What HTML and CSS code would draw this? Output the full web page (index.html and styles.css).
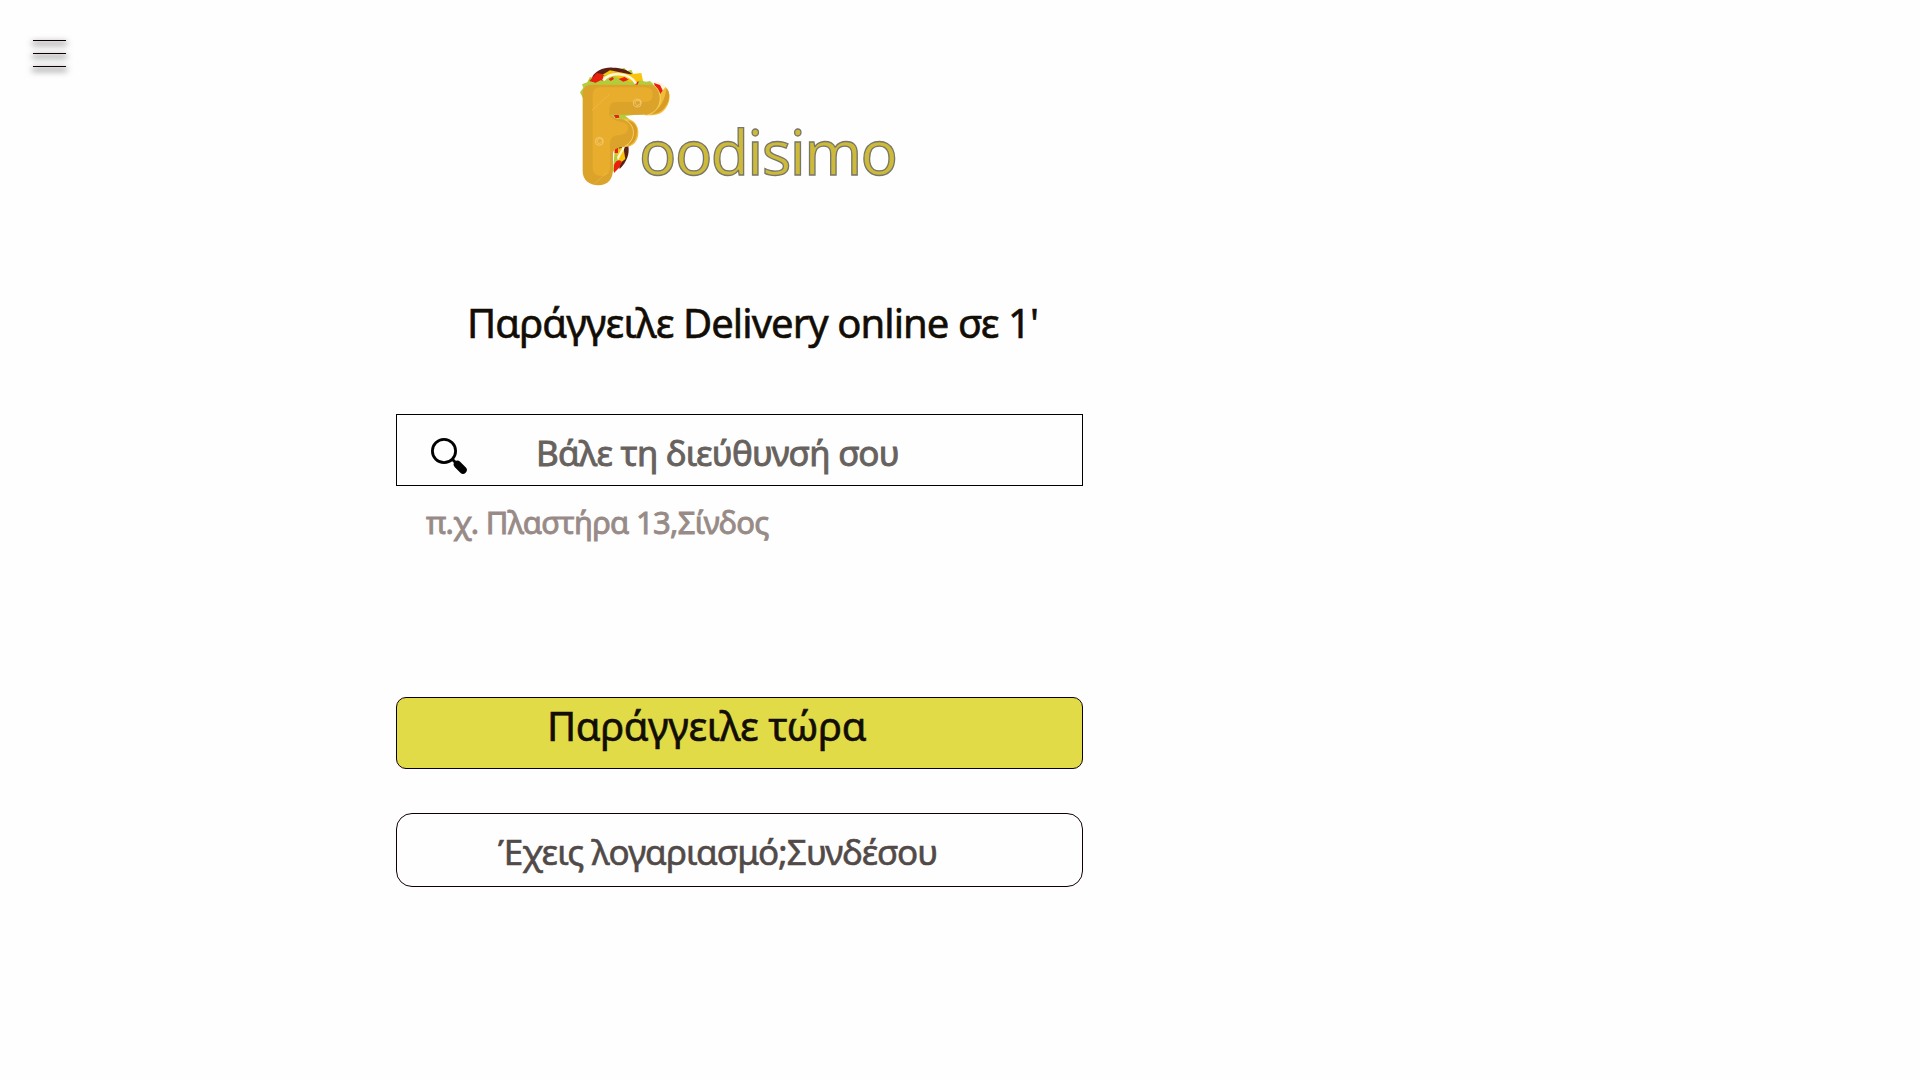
FILE: index.html
```html
<!DOCTYPE html>
<html lang="el">
<head>
<meta charset="utf-8">
<title>Foodisimo</title>
<link rel="stylesheet" href="styles.css">
</head>
<body>
<nav class="menu" aria-label="Menu"><span></span><span></span><span></span></nav>
<main class="page">
  <div class="brand">
    <svg class="brand-mark" viewBox="0 0 330 420" width="110" height="140">
      <path fill="#b3cc3c" d="M30 112l10-14-4-10 16-6 8-16 14 4 20-18 50-14 8 6 10-6 10 10 12-4 6 14 12 10 14 18 14-4 10 4 12-4 30 10 12 30-20 50-200 20-34-60z"/>
      <path fill="#5a2013" d="M66 68c8-20 36-32 62-30 26 0 48 8 60 20l-30 10-50-10-28 14z"/>
      <path fill="#f8c40c" d="M96 60l24-14 60 12 34-4 6 28-40-2-60-20z"/>
      <path fill="#e9200d" d="M58 78l22-24 20 4-2 20-22 6zM116 72l12-6 4 6-10 6zM146 72l18-6 12 8-16 6zM194 88c6-14 28-10 30 2l-8 4z"/>
      <path fill="none" stroke="#fff6dc" stroke-width="8" d="M100 76c20-26 78-26 98 10"/>
      <path fill="#b3cc3c" d="M36 108l12-22 16-6 12 4 16-8 22 4 14-2 14 8 16-2 14 8 16-2 12 6 8-20 20 4 12-2 12 12-2 30H44z"/>
      <path fill="#fff5df" d="M246 82c32-8 44 16 44 36l-20 10z"/>
      <path fill="#e9200d" d="M252 84l18 6 14 28-8 4-20-22z"/>
      <path fill="#f0bd39" d="M286 96c14 10 16 34 8 52-10 22-26 33-50 33h-20z"/>
      <path fill="#da9b24" d="M289 100c14 12 10 40-4 56-10 14-24 20-40 22 26-18 40-42 44-78z"/>
      <path fill="#5a2013" d="M132 272h43c4 24-4 48-26 70z"/>
      <path fill="#f8c40c" d="M134 286l26-10 6 36-18 14-14-8z"/>
      <path fill="none" stroke="#fff6dc" stroke-width="7" d="M162 272c-4 20-16 24-26 56"/>
      <path fill="#b3cc3c" d="M128 352l8-80 14-2-10 30 8 36z"/>
      <path fill="#e9200d" d="M134 282l10-4v16h-10zM132 330c8-18 20-16 24-8l-10 18-14 14z"/>
      <path fill="#b3cc3c" d="M126 178l34 0 20 16-20 8z"/>
      <path fill="#e9200d" d="M132 180l14 0 2 8-12 2z"/>
      <path fill="#efbd3c" d="M150 192c36-8 55 16 55 40 0 28-16 46-48 44z"/>
      <path fill="#da9b24" d="M174 196c24 6 30 24 26 42-2 18-12 30-26 34 16-24 16-52 0-76z"/>
      <path fill="#dca32b" d="M64 89h172c22 0 34 14 34 38 0 30-12 52-36 52H120c12 10 24 12 38 14 20 2 31 16 31 36 0 30-14 46-36 48-16 2-24 8-24 22v44c0 28-14 48-44 48-28 0-47-16-47-42V116c0-16 8-27 26-27z"/>
      <path fill="#e8ad2c" d="M92 97h128c20 0 28 6 28 20 0 18-8 24-26 24h-84c-14 0-20 10-20 26v14c12 16 24 18 36 20 14 2 20 8 20 16 0 16-10 22-32 24-16 2-22 12-22 28v68c0 18-8 26-24 26-18 0-28-8-28-26V124c0-18 6-27 24-27z"/>
      <path fill="none" stroke="#f5d260" stroke-width="3" d="M254 92c30 28 18 78-22 88M164 194c34 14 36 62 0 80"/>
      <g fill="none" stroke="#f2cd79" stroke-width="2.5">
        <path d="M205 152c-14-2-12-18 0-16 10 2 8 14 0 12M91 267c-14-2-12-18 0-16 10 2 8 14 0 12"/>
        <circle cx="202" cy="144" r="12"/><circle cx="88" cy="259" r="12"/>
        <path stroke-width="1.5" d="M66 166l52-48M74 386l38-34" stroke-dasharray="5 3"/>
      </g>
    </svg>
    <span class="brand-name">oodisimo</span>
  </div>
  <h1 class="title">Παράγγειλε Delivery online σε 1'</h1>
  <div class="address">
    <svg class="search-icon" viewBox="0 0 36 36" width="36" height="36">
      <circle cx="13" cy="13" r="11.6" fill="none" stroke="#000" stroke-width="2.8"/>
      <path d="M21 21l4 4" stroke="#000" stroke-width="3"/>
      <path d="M26.5 26.5l5.5 5.5" stroke="#000" stroke-width="7.5" stroke-linecap="round"/>
    </svg>
    <span class="address-label">Βάλε τη διεύθυνσή σου</span>
  </div>
  <p class="hint">π.χ. Πλαστήρα 13,Σίνδος</p>
  <div class="button order"><span>Παράγγειλε τώρα</span></div>
  <div class="button login"><span>Έχεις λογαριασμό;Συνδέσου</span></div>
</main>
</body>
</html>
```
FILE: styles.css
```css
* { box-sizing: border-box; }
body {
  margin: 0;
  height: 1080px;
  display: flex;
  align-items: flex-start;
  overflow: hidden;
  background: #fefefe;
  font-family: "Noto Sans", "Open Sans", sans-serif;
  white-space: nowrap;
}
.menu {
  width: 396px;
  padding: 40px 0 0 33px;
  display: flex;
  flex-direction: column;
  gap: 12px;
}
.menu span {
  width: 33px;
  height: 1px;
  background: #100006;
  box-shadow: 0 3px 6px 1px rgba(0, 0, 0, .5);
}
.page { width: 687px; padding-top: 55px; }
.brand { display: flex; height: 140px; padding-left: 174px; }
.brand-mark { flex: none; }
.brand-name {
  margin: 54px 0 0 -41px;
  font-size: 62px;
  line-height: 84px;
  color: #cdb93a;
  -webkit-text-stroke: 1.3px #77766a;
  letter-spacing: -1.6px;
}
.title {
  margin: 101px 0 0 71px;
  font-size: 40px;
  font-weight: 400;
  line-height: 54px;
  letter-spacing: -.93px;
  color: #120d05;
  -webkit-text-stroke: .6px #120d05;
}
.address {
  display: flex;
  height: 72px;
  margin-top: 64px;
  padding: 4px 0 0 34px;
  border: 1px solid #000;
}
.search-icon { margin-top: 19px; }
.address-label {
  margin-left: 69px;
  font-size: 35px;
  line-height: 68px;
  letter-spacing: -.73px;
  color: #67625e;
  -webkit-text-stroke: .9px #67625e;
}
.hint {
  margin: 14px 0 0 30px;
  font-size: 31px;
  line-height: 44px;
  letter-spacing: -.7px;
  color: #988b87;
  -webkit-text-stroke: .9px #988b87;
}
.button { border: 1px solid #100006; }
.order {
  height: 72px;
  margin-top: 153px;
  padding: 1px 0 0 150px;
  border-radius: 10px;
  background: #e1db47;
  font-size: 40px;
  line-height: 54px;
  letter-spacing: -.45px;
  color: #120d05;
  -webkit-text-stroke: .6px #120d05;
}
.login {
  height: 74px;
  margin-top: 44px;
  padding: 14px 0 0 101px;
  border-radius: 16px;
  font-size: 35px;
  line-height: 48px;
  letter-spacing: -.87px;
  color: #514a48;
  -webkit-text-stroke: .6px #514a48;
}
```
